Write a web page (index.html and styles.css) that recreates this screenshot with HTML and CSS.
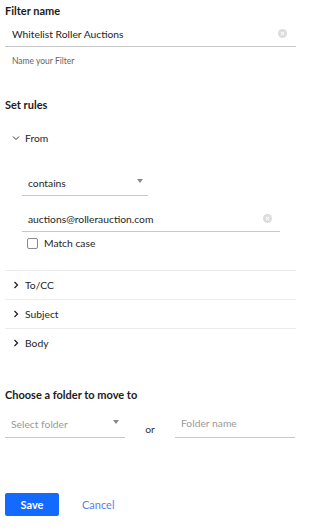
FILE: index.html
```html
<!DOCTYPE html>
<html lang="en">
<head>
    <meta charset="UTF-8">
    <meta name="viewport" content="width=device-width, initial-scale=1.0">
    <title>Edit filter</title>
    <link rel="stylesheet" href="styles.css">
</head>
<body>
    <div class="panel">
        <div class="label">Filter name</div>
        <div class="text-field name-field">
            <span class="value">Whitelist Roller Auctions</span>
            <span class="clear"></span>
        </div>
        <div class="help">Name your Filter</div>

        <div class="label rules-title">Set rules</div>

        <div class="rule open">
            <div class="rule-head">
                <svg class="chev" width="8" height="8" viewBox="0 0 8 8"><path d="M1 2.5 L4 5.5 L7 2.5" fill="none" stroke="#333" stroke-width="1"/></svg>
                <span>From</span>
            </div>
            <div class="rule-body">
                <div class="select-field contains">
                    <span class="value">contains</span>
                    <span class="caret"></span>
                </div>
                <div class="text-field email-field">
                    <span class="value">auctions@rollerauction.com</span>
                    <span class="clear"></span>
                </div>
                <label class="check-row">
                    <span class="box"></span>
                    <span>Match case</span>
                </label>
            </div>
        </div>

        <div class="rule">
            <div class="rule-head">
                <svg class="chev" width="8" height="8" viewBox="0 0 8 8"><path d="M2.5 1 L5.5 4 L2.5 7" fill="none" stroke="#222" stroke-width="1.3"/></svg>
                <span>To/CC</span>
            </div>
        </div>
        <div class="rule">
            <div class="rule-head">
                <svg class="chev" width="8" height="8" viewBox="0 0 8 8"><path d="M2.5 1 L5.5 4 L2.5 7" fill="none" stroke="#222" stroke-width="1.3"/></svg>
                <span>Subject</span>
            </div>
        </div>
        <div class="rule last">
            <div class="rule-head">
                <svg class="chev" width="8" height="8" viewBox="0 0 8 8"><path d="M2.5 1 L5.5 4 L2.5 7" fill="none" stroke="#222" stroke-width="1.3"/></svg>
                <span>Body</span>
            </div>
        </div>

        <div class="label folder-title">Choose a folder to move to</div>
        <div class="folder-row">
            <div class="select-field folder-select">
                <span class="value placeholder">Select folder</span>
                <span class="caret"></span>
            </div>
            <span class="or">or</span>
            <div class="text-field folder-name">
                <span class="value placeholder">Folder name</span>
            </div>
        </div>

        <div class="actions">
            <button class="save">Save</button>
            <button class="cancel">Cancel</button>
        </div>
    </div>
</body>
</html>
```

FILE: styles.css
```css
body {
    margin: 0;
    font-family: Lato, "Noto Sans", sans-serif;
    font-size: 10.3px;
    color: #252525;
    background-color: #fff;
}
.panel {
    padding: 0 5px;
    width: 291px;
}
.label {
    font-size: 11px;
    font-weight: bold;
    line-height: 21px;
    height: 21px;
    color: #1b1b1b;
}
.text-field,
.select-field {
    display: flex;
    align-items: center;
    height: 25px;
    border-bottom: 1px solid #c8c8c8;
    box-sizing: content-box;
}
.text-field .value,
.select-field .value {
    flex: 1;
    padding-left: 7px;
}
.placeholder {
    color: #9a9a9a;
}
.clear {
    width: 9px;
    height: 9px;
    border-radius: 50%;
    background-color: #dcdcdc;
    margin-right: 9px;
    position: relative;
}
.clear::before,
.clear::after {
    content: "";
    position: absolute;
    left: 4px;
    top: 2px;
    width: 1px;
    height: 5px;
    background-color: #fff;
    transform: rotate(45deg);
}
.clear::after {
    transform: rotate(-45deg);
}
.caret {
    width: 0;
    height: 0;
    border-left: 3.5px solid transparent;
    border-right: 3.5px solid transparent;
    border-top: 4px solid #8a8a8a;
    margin-right: 5px;
    margin-bottom: 4px;
}
.help {
    font-size: 8.5px;
    color: #666;
    line-height: 28px;
    height: 28px;
    padding-left: 7px;
}
.rules-title {
    margin-top: 19px;
    height: 22px;
    line-height: 22px;
}
.rule {
    border-bottom: 1px solid #ececec;
}
.rule.open {
    margin-top: 8px;
    padding-bottom: 16px;
}
.rule.last {
    border-bottom: none;
}
.rule-head {
    display: flex;
    align-items: center;
    height: 28px;
    padding-left: 7px;
}
.rule .chev {
    margin-right: 5px;
}
.rule-body {
    padding-left: 17px;
    width: 258px;
}
.contains {
    margin-top: 18px;
    width: 126px;
}
.contains .value {
    padding-left: 6px;
}
.email-field {
    margin-top: 10px;
}
.email-field .value {
    padding-left: 6px;
}
.email-field .clear {
    margin-right: 8px;
}
.check-row {
    display: flex;
    align-items: center;
    height: 22px;
    padding-left: 5px;
}
.check-row .box {
    width: 9px;
    height: 9px;
    border: 1px solid #8a8a8a;
    border-radius: 2px;
    margin-right: 6px;
}
.folder-title {
    margin-top: 27px;
    height: 22px;
    line-height: 22px;
}
.folder-row {
    display: flex;
    align-items: flex-end;
    margin-top: 5px;
}
.folder-select {
    width: 120px;
    height: 26px;
}
.folder-select .value {
    padding-left: 6px;
}
.folder-select .caret {
    margin-right: 6px;
}
.or {
    width: 50px;
    text-align: center;
    line-height: 20px;
    margin-bottom: -1px;
    color: #333;
}
.folder-name {
    width: 120px;
    height: 26px;
}
.folder-name .value {
    padding-left: 6px;
    margin-bottom: 3px;
}
.actions {
    display: flex;
    align-items: center;
    margin-top: 55px;
}
button {
    font-family: inherit;
    font-size: 11px;
    border: none;
    cursor: pointer;
    background: none;
}
.save {
    width: 54px;
    height: 23px;
    background-color: #1469ff;
    color: #fff;
    font-weight: bold;
    border-radius: 2px;
}
.cancel {
    margin-left: 18px;
    color: #5a80ea;
    padding: 0 5px;
}
```
